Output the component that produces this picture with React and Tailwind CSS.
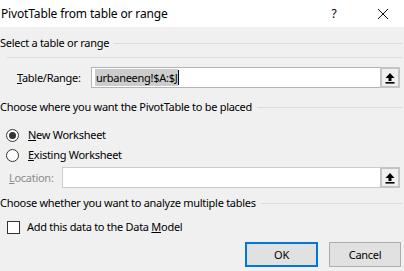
import React from "react";

function UpIcon() {
  return (
    <svg width="10" height="12" viewBox="0 0 10 12">
      <path d="M5 1 L9.5 6 L6.5 6 L6.5 9 L3.5 9 L3.5 6 L0.5 6 Z" fill="#000" />
      <rect x="0.5" y="10" width="9" height="1.6" fill="#000" />
    </svg>
  );
}

function PickButton() {
  return (
    <div className="w-[20px] my-[-1px] mr-[-1px] border-2 border-[#c4c4c4] bg-[#f0f0f0] flex items-center justify-center">
      <UpIcon />
    </div>
  );
}

function SectionHeader({ text, className = "" }) {
  return (
    <div className={"h-[16px] flex items-center " + className}>
      <span className="whitespace-nowrap">{text}</span>
      <div className="flex-1 h-px bg-[#dadada] ml-[5px] mr-[2px]" />
    </div>
  );
}

export default function App() {
  return (
    <div className="w-[404px] h-[271px] bg-[#f0f0f0] overflow-hidden text-[11px] tracking-[-0.28px] leading-[16px] text-black font-['Noto_Sans',sans-serif]">
      <div className="h-[27px] bg-white flex items-center text-[12px] tracking-[-0.15px]">
        <span className="pl-[1px] flex-1">PivotTable from table or range</span>
        <span className="w-[12px] text-center mr-[37px]">?</span>
        <svg width="12" height="12" viewBox="0 0 12 12" className="mr-[15px]">
          <path d="M1 1 L11 11 M11 1 L1 11" stroke="#111" strokeWidth="1" />
        </svg>
      </div>

      <SectionHeader text="Select a table or range" className="mt-[8px]" />
      <div className="h-px bg-[#dcdcdc] ml-[7px] mr-[2px] mt-[6px]" />

      <div className="flex items-center mt-[9px] pr-[4px]">
        <span className="pl-[17px] w-[91px]"><u>T</u>able/Range:</span>
        <div className="flex-1 h-[21px] bg-white border border-[#b4b4b4] flex items-stretch">
          <div className="flex-1 flex items-center pl-[3px]">
            <span className="bg-[#cccccc] h-[17px] leading-[17px] pl-[1px] pr-[1px]">urbaneeng!$A:$J</span>
            <span className="w-px h-[15px] bg-black" />
          </div>
          <PickButton />
        </div>
      </div>

      <SectionHeader text="Choose where you want the PivotTable to be placed" className="mt-[11px]" />

      <div className="h-[16px] flex items-center mt-[12px] pl-[6px]">
        <div className="w-[13px] h-[13px] rounded-full border border-[#333] flex items-center justify-center bg-white">
          <div className="w-[7px] h-[7px] rounded-full bg-[#333]" />
        </div>
        <span className="ml-[9px]"><u>N</u>ew Worksheet</span>
      </div>
      <div className="h-[16px] flex items-center mt-[4px] pl-[6px]">
        <div className="w-[13px] h-[13px] rounded-full border border-[#333] bg-white" />
        <span className="ml-[9px]"><u>E</u>xisting Worksheet</span>
      </div>

      <div className="flex items-center mt-[4px] pr-[4px]">
        <span className="pl-[9px] w-[62px] text-[#8c8c8c]"><u>L</u>ocation:</span>
        <div className="flex-1 h-[21px] bg-white border border-[#cccccc] flex items-stretch">
          <div className="flex-1" />
          <PickButton />
        </div>
      </div>

      <SectionHeader text="Choose whether you want to analyze multiple tables" className="mt-[7px]" />

      <div className="h-[16px] flex items-center mt-[8px] pl-[7px]">
        <div className="w-[13px] h-[13px] border border-[#333] bg-white" />
        <span className="ml-[7px]">Add this data to the Data <u>M</u>odel</span>
      </div>

      <div className="flex justify-end gap-[11px] mt-[7px] pr-[3px]">
        <button className="w-[73px] h-[25px] bg-[#e1e1e1] border-2 border-[#0078d7] text-center">OK</button>
        <button className="w-[72px] h-[25px] bg-[#e1e1e1] border border-[#adadad] text-center">Cancel</button>
      </div>
    </div>
  );
}
